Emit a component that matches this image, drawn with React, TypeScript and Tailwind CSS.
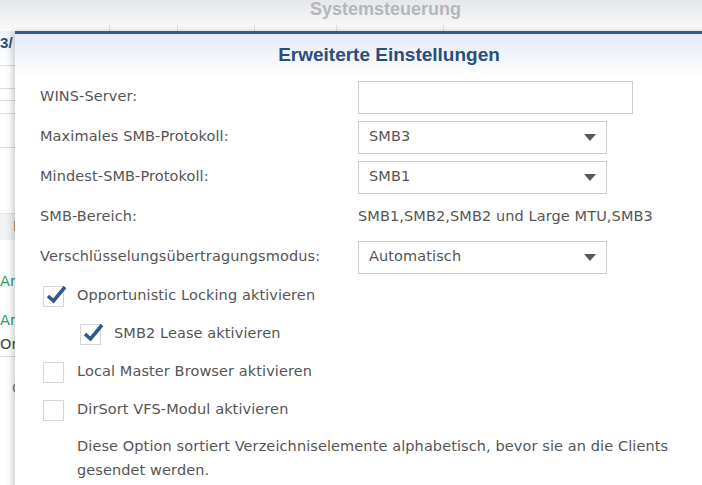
import type { ReactNode } from "react";

function Select({ value }: { value: string }) {
  return (
    <div className="flex h-[33px] w-[249px] items-center justify-between border border-[#c9ced6] bg-white pl-[10px] pr-[10px]">
      <span>{value}</span>
      <svg width="12" height="7" viewBox="0 0 12 7">
        <path d="M0 0 H12 L6 7 Z" fill="#555a60" />
      </svg>
    </div>
  );
}

function Row({ label, children }: { label: string; children: ReactNode }) {
  return (
    <div className="grid h-[40px] grid-cols-[318px_auto] items-center">
      <span>{label}</span>
      <div>{children}</div>
    </div>
  );
}

function Check({ label, checked, indent }: { label: string; checked?: boolean; indent?: boolean }) {
  return (
    <div className={`flex h-[38px] items-center gap-[13px] ${indent ? "pl-[40px]" : "pl-[3px]"}`}>
      <div className="relative h-[21px] w-[21px] border border-[#d3d7dd] bg-white">
        {checked && (
          <svg className="absolute left-[1px] top-[-4px]" width="22" height="22" viewBox="0 0 22 22">
            <path d="M3 13 L8.5 18 L20 4" fill="none" stroke="#30598c" strokeWidth="3.6" />
          </svg>
        )}
      </div>
      <span>{label}</span>
    </div>
  );
}

export default function App() {
  return (
    <div className="relative h-[485px] w-[702px] overflow-hidden bg-white font-['DejaVu_Sans',sans-serif] text-[14.5px] tracking-[0.1px] text-[#555]">
      {/* window behind */}
      <div className="flex h-[31px] flex-col bg-gradient-to-b from-[#e5e7ea] to-[#fbfbfc]">
        <div className="h-[24px] pl-[310px] font-['Liberation_Sans',sans-serif] text-[18px] font-bold leading-[18px] tracking-normal text-[#b3b7bd]">
          Systemsteuerung
        </div>
        <div className="flex h-[7px]">
          <div className="w-[110px] border-r border-[#e2e4e8]" />
          <div className="w-[68px] border-r border-[#e2e4e8]" />
          <div className="w-[77px] border-r border-[#e2e4e8]" />
          <div className="w-[82px] border-r border-[#e2e4e8]" />
          <div className="w-[107px] border-r border-[#e2e4e8]" />
        </div>
      </div>
      <div className="flex w-[40px] flex-col">
        <div className="flex h-[35px] items-center border-b border-[#d9dce1] bg-gradient-to-b from-[#eef2f8] to-white pb-[10px] font-['Liberation_Sans',sans-serif] text-[15px] font-bold text-[#2e4c78]">
          3/
        </div>
        <div className="h-[23px] border-b border-[#d9dce1]" />
        <div className="h-[12px] border-b border-[#d9dce1]" />
        <div className="h-[13px] border-b border-[#d9dce1]" />
        <div className="h-[34px] border-b border-[#d9dce1]" />
        <div className="h-[65px]" />
        <div className="flex h-[27px] items-center border-t border-[#e1e4e8] bg-[#f0f2f5] pl-[13px] text-[#666]">I</div>
        <div className="h-[30px]" />
        <div className="flex h-[24px] items-center text-[#2f9a63]">An</div>
        <div className="h-[15px]" />
        <div className="flex h-[24px] items-center text-[#2f9a63]">An</div>
        <div className="flex h-[24px] items-center border-b border-[#d9dce1] text-[#444]">Ord</div>
        <div className="flex h-[64px] items-center pl-[12px] text-[#777]">C</div>
      </div>

      {/* dialog */}
      <div className="absolute left-[15px] top-[31px] h-[470px] w-[748px] border-t-[3px] border-[#375a8c] bg-white shadow-[-3px_0_6px_rgba(0,0,0,0.18)]">
        <div className="flex h-[43px] items-center justify-center bg-gradient-to-b from-[#e3eaf4] to-white font-['Liberation_Sans',sans-serif] text-[19px] font-bold tracking-normal text-[#2b4d7e]">
          Erweiterte Einstellungen
        </div>
        <div className="flex flex-col pl-[25px]">
          <Row label="WINS-Server:">
            <div className="h-[33px] w-[275px] border border-[#c9ced6] bg-white" />
          </Row>
          <Row label="Maximales SMB-Protokoll:">
            <Select value="SMB3" />
          </Row>
          <Row label="Mindest-SMB-Protokoll:">
            <Select value="SMB1" />
          </Row>
          <Row label="SMB-Bereich:">
            <span>SMB1,SMB2,SMB2 und Large MTU,SMB3</span>
          </Row>
          <Row label="Verschlüsselungsübertragungsmodus:">
            <Select value="Automatisch" />
          </Row>
          <Check label="Opportunistic Locking aktivieren" checked />
          <Check label="SMB2 Lease aktivieren" checked indent />
          <Check label="Local Master Browser aktivieren" />
          <Check label="DirSort VFS-Modul aktivieren" />
          <p className="mt-[5px] w-[640px] pl-[37px] leading-[24px]">
            Diese Option sortiert Verzeichniselemente alphabetisch, bevor sie an die Clients gesendet werden.
          </p>
        </div>
      </div>
    </div>
  );
}
